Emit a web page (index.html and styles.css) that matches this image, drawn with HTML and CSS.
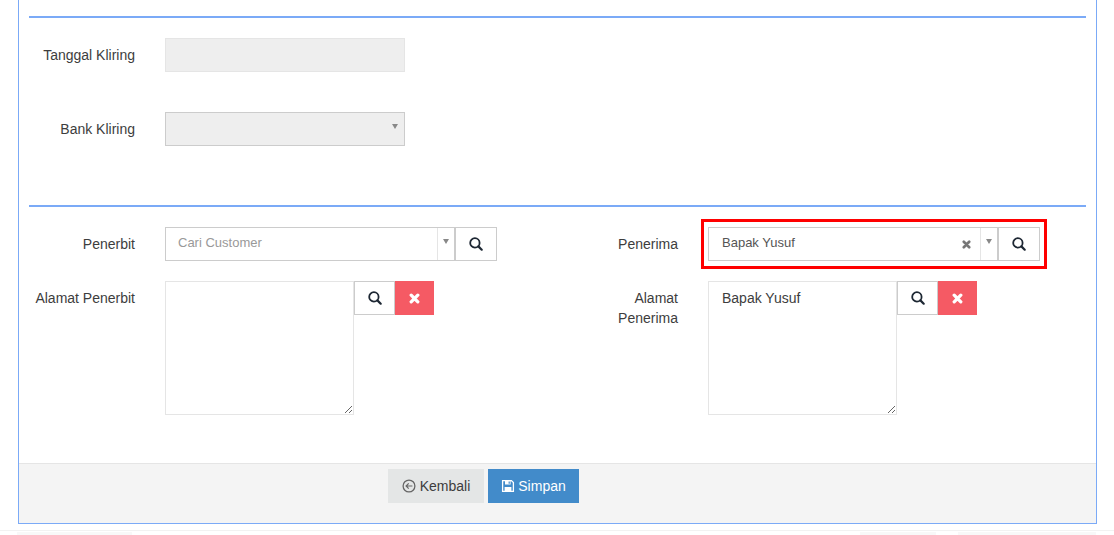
FILE: index.html
```html
<!DOCTYPE html>
<html lang="id">
<head>
<meta charset="utf-8">
<title>Form Kliring</title>
<link rel="stylesheet" href="styles.css">
</head>
<body>
<svg class="defs" width="0" height="0" aria-hidden="true">
  <symbol id="i-search" viewBox="0 0 14 14"><circle cx="5.9" cy="5.9" r="4.7" fill="none" stroke="currentColor" stroke-width="1.8"/><path d="M9.4 9.4 12.7 12.7" fill="none" stroke="currentColor" stroke-width="2.2" stroke-linecap="round"/></symbol>
  <symbol id="i-times" viewBox="0 0 10 10"><path d="M2 2 8 8M8 2 2 8" fill="none" stroke="currentColor" stroke-width="3" stroke-linecap="round"/></symbol>
</svg>
<main class="panel">
  <div class="panel-body">
    <hr class="rule rule-top">
    <div class="row row-klir1">
      <label class="label">Tanggal Kliring</label>
      <div class="input-disabled"></div>
    </div>
    <div class="row row-klir2">
      <label class="label">Bank Kliring</label>
      <div class="select-disabled"><span class="arrow"></span></div>
    </div>
    <hr class="rule rule-mid">
    <div class="columns row-party">
      <div class="row">
        <label class="label">Penerbit</label>
        <div class="combo">
          <div class="select2">
            <span class="select2-text placeholder">Cari Customer</span>
            <span class="select2-arrow"><span class="arrow"></span></span>
          </div>
          <button class="btn btn-icon" type="button"><svg class="ico-search"><use href="#i-search"/></svg></button>
        </div>
      </div>
      <div class="row">
        <label class="label">Penerima</label>
        <div class="combo combo-marked">
          <div class="select2">
            <span class="select2-text">Bapak Yusuf</span>
            <svg class="ico-clear"><use href="#i-times"/></svg>
            <span class="select2-arrow"><span class="arrow"></span></span>
          </div>
          <button class="btn btn-icon" type="button"><svg class="ico-search"><use href="#i-search"/></svg></button>
        </div>
      </div>
    </div>
    <div class="columns row-address">
      <div class="row">
        <label class="label">Alamat Penerbit</label>
        <textarea class="address"></textarea>
        <button class="btn btn-icon" type="button"><svg class="ico-search"><use href="#i-search"/></svg></button>
        <button class="btn btn-danger" type="button"><svg class="ico-times"><use href="#i-times"/></svg></button>
      </div>
      <div class="row">
        <label class="label">Alamat Penerima</label>
        <textarea class="address">Bapak Yusuf</textarea>
        <button class="btn btn-icon" type="button"><svg class="ico-search"><use href="#i-search"/></svg></button>
        <button class="btn btn-danger" type="button"><svg class="ico-times"><use href="#i-times"/></svg></button>
      </div>
    </div>
  </div>
  <footer class="panel-footer">
    <button class="btn btn-back" type="button">
      <svg class="ico-foot ico-back" viewBox="0 0 14 14"><circle cx="7" cy="7" r="5.9" fill="none" stroke="currentColor" stroke-width="1.3"/><path d="M10.4 7H4.2M6.7 4.4 4.1 7l2.6 2.6" fill="none" stroke="currentColor" stroke-width="1.2"/></svg>Kembali
    </button>
    <button class="btn btn-save" type="button">
      <svg class="ico-foot" viewBox="0 0 14 14"><path d="M1.6 1.6h8.8l2 2v8.8H1.6z" fill="none" stroke="currentColor" stroke-width="1.3"/><path d="M4 1.8h5.6v3.6H4zM3.6 8h6.8v4.2H3.6z" fill="currentColor"/><path d="M7.6 2.4h1.2v2.4H7.6z" fill="#428bca"/></svg>Simpan
    </button>
  </footer>
</main>
<div class="page-bottom">
  <span class="ghost ghost-a"></span>
  <span class="ghost ghost-b"></span>
  <span class="ghost ghost-c"></span>
</div>
</body>
</html>
```
FILE: styles.css
```css
* { box-sizing: border-box; }

html, body { margin: 0; padding: 0; height: 535px; overflow: hidden; background: #fff; }

body {
  font-family: "Liberation Sans", Arial, sans-serif;
  font-size: 14px;
  color: #3d3d3d;
}

.defs { position: absolute; }

.panel {
  width: 1079px;
  height: 524px;
  margin-left: 18px;
  border: 1px solid #7baaf7;
  border-top: 0;
  display: flex;
  flex-direction: column;
}

.panel-body { flex: 1; padding: 16px 10px 0; }

.rule { margin: 0; border: 0; height: 2px; background: #7baaf7; }

.row { display: flex; align-items: flex-start; }

.row-klir1 { margin-top: 20px; }
.row-klir2 { margin-top: 40px; }
.rule-mid { margin-top: 59px; }

.columns { display: grid; grid-template-columns: 543px 1fr; }
.row-party { margin-top: 20px; }
.row-address { margin-top: 20px; }

.label {
  width: 100px;
  margin: 0 30px 0 6px;
  flex: none;
  text-align: right;
  line-height: 20px;
  padding-top: 7px;
  color: #3d3d3d;
}

.input-disabled, .select-disabled {
  position: relative;
  width: 240px;
  height: 34px;
  background: #eee;
  border: 1px solid #e5e5e5;
}

.select-disabled { border-color: #ccc; }

.arrow {
  display: block;
  width: 0;
  height: 0;
  border-left: 3px solid transparent;
  border-right: 3px solid transparent;
  border-top: 5px solid #888;
}

.select-disabled .arrow { position: absolute; right: 6px; top: 11px; }

.combo { display: flex; width: 332px; position: relative; }

.combo-marked::after {
  content: "";
  position: absolute;
  inset: -8px -7px;
  border: 3px solid #f00;
  pointer-events: none;
}

.combo .btn-icon { border-left: 0; }

.select2 {
  flex: 1;
  height: 34px;
  display: flex;
  align-items: center;
  border: 1px solid #ccc;
  border-right-width: 2px;
}

.select2-text {
  flex: 1;
  height: 32px;
  font-size: 13px;
  line-height: 28px;
  padding: 1px 0 0 13px;
  color: #555;
}

.select2-text.placeholder { color: #999; padding-left: 12px; }

.select2-arrow {
  flex: none;
  width: 17px;
  height: 32px;
  border-left: 1px solid #e5e5e5;
  padding: 11px 0 0 5px;
}

.ico-clear { width: 9px; height: 9px; margin-right: 9px; color: #777; }

.btn {
  flex: none;
  height: 34px;
  border: 1px solid transparent;
  border-radius: 0;
  padding: 0;
  font: inherit;
  display: inline-flex;
  align-items: center;
  justify-content: center;
}

.btn-icon { width: 41px; background: #fff; border-color: #ccc; color: #1d2733; }

.btn-danger { width: 39px; background: #f55a64; color: #fff; }

.ico-search { width: 14px; height: 14px; }
.ico-times { width: 11px; height: 11px; }

.address {
  width: 189px;
  height: 134px;
  flex: none;
  border: 1px solid #e5e5e5;
  padding: 6px 13px;
  margin: 0;
  font: inherit;
  line-height: 20px;
  color: #3d3d3d;
  background: #fff;
  outline: 0;
}

.panel-footer {
  flex: none;
  height: 60px;
  background: #f4f4f4;
  border-top: 1px solid #e5e5e5;
  padding: 5px 0 0 369px;
  display: flex;
  gap: 4px;
}

.btn-back { width: 96px; background: #e4e6e6; color: #3d3d3d; gap: 4px; }
.btn-save { width: 91px; background: #428bca; color: #fff; gap: 3px; }

.ico-foot { width: 14px; height: 14px; flex: none; }
.ico-back { color: #666; }

.page-bottom {
  position: relative;
  margin-top: 6px;
  height: 5px;
  border-top: 1px solid #f2f2f2;
}

.ghost { position: absolute; top: 1px; height: 4px; background: #f8f8f8; }
.ghost-a { left: 17px; width: 115px; }
.ghost-b { left: 860px; width: 76px; }
.ghost-c { left: 958px; width: 138px; }
```
